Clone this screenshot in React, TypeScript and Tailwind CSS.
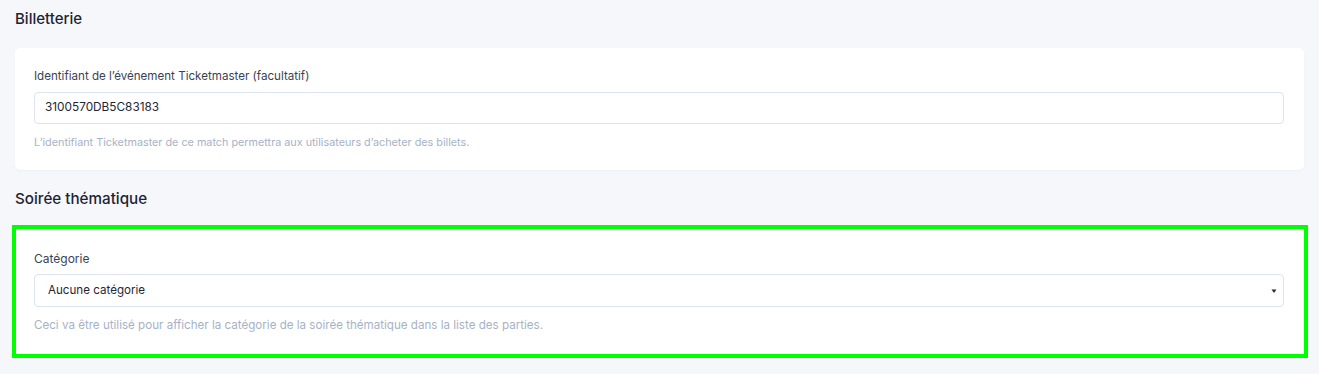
import React from "react";

export default function App() {
  return (
    <div className="w-[1319px] h-[374px] bg-[#f5f7fa] overflow-hidden font-['Inter',sans-serif] px-[15px]">
      <h2 className="pt-[10px] h-[48px] text-[15px] font-medium text-[#1c2434] leading-[18px]">Billetterie</h2>
      <div className="w-[1289px] h-[122px] bg-white rounded-[5px] shadow-[0_1px_2px_rgba(30,40,80,0.04)] px-[19px] pt-[21px]">
        <label className="block text-[11.6px] text-[#3a4354] leading-[14px]">Identifiant de l’événement Ticketmaster (facultatif)</label>
        <div className="mt-[9px] w-[1250px] h-[32px] border border-[#dde3ef] rounded-[4px] flex items-center px-[10px] text-[11.8px] text-[#1f2735]">3100570DB5C83183</div>
        <p className="mt-[12px] text-[10.8px] text-[#a7b2c6] leading-[13px]">L’identifiant Ticketmaster de ce match permettra aux utilisateurs d’acheter des billets.</p>
      </div>
      <h2 className="mt-[20px] h-[35px] text-[15.2px] font-medium text-[#1c2434] leading-[18px]">Soirée thématique</h2>
      <div className="-ml-[3px] w-[1296px] h-[133px] bg-white border-[4px] border-[#00ff00] px-[18px] pt-[23px]">
        <label className="block text-[12px] text-[#3a4354] leading-[14px]">Catégorie</label>
        <div className="mt-[8px] w-[1250px] h-[33px] border border-[#dde3ef] rounded-[4px] flex items-center justify-between pl-[13px] pr-[5px] text-[11.6px] text-[#1f2735]">
          <span>Aucune catégorie</span>
          <svg width="8" height="8" viewBox="0 0 8 8"><path d="M1.5 2.5h5L4 6z" fill="#222b3a" /></svg>
        </div>
        <p className="mt-[12px] text-[11.6px] text-[#a7b2c6] leading-[13px]">Ceci va être utilisé pour afficher la catégorie de la soirée thématique dans la liste des parties.</p>
      </div>
    </div>
  );
}
